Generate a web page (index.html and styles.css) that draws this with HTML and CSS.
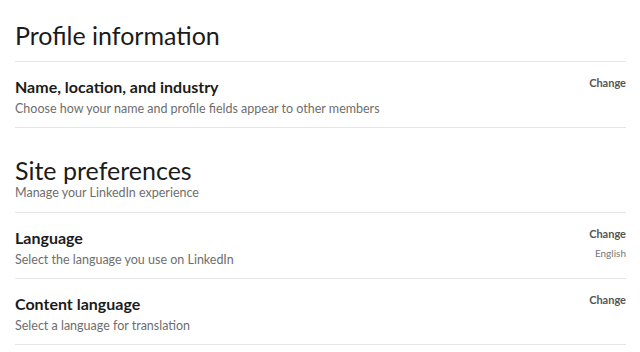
FILE: index.html
```html
<!DOCTYPE html>
<html lang="en">
<head>
  <meta charset="UTF-8" />
  <title>Settings</title>
  <link rel="stylesheet" href="styles.css">
</head>
<body>
  <div class="settings">
    <section class="group">
      <div class="group-head">
        <h2>Profile information</h2>
      </div>
      <div class="row">
        <div class="row-text">
          <h3>Name, location, and industry</h3>
          <p>Choose how your name and profile fields appear to other members</p>
        </div>
        <div class="row-action">
          <a href="#">Change</a>
        </div>
      </div>
    </section>

    <section class="group">
      <div class="group-head with-sub">
        <h2>Site preferences</h2>
        <p>Manage your LinkedIn experience</p>
      </div>
      <div class="row">
        <div class="row-text">
          <h3>Language</h3>
          <p>Select the language you use on LinkedIn</p>
        </div>
        <div class="row-action">
          <a href="#">Change</a>
          <span class="value">English</span>
        </div>
      </div>
      <div class="row">
        <div class="row-text">
          <h3>Content language</h3>
          <p>Select a language for translation</p>
        </div>
        <div class="row-action">
          <a href="#">Change</a>
        </div>
      </div>
    </section>
  </div>
</body>
</html>
```

FILE: styles.css
```css
* {
  box-sizing: border-box;
  margin: 0;
  padding: 0;
}

body {
  font-family: 'Lato', 'Open Sans', sans-serif;
  background: #fff;
  color: #1d1d1d;
}

.settings {
  padding: 0 14px 0 15px;
}

.group-head {
  height: 62px;
  padding-top: 20px;
  border-bottom: 1px solid #e6e6e6;
}

.group-head.with-sub {
  height: 85px;
  padding-top: 27px;
}

.group-head h2 {
  font-size: 25px;
  font-weight: 400;
  line-height: 30px;
  color: #1b1b1b;
}

.group-head p {
  font-size: 12.5px;
  line-height: 16px;
  color: #6e6e6e;
}

.row {
  display: flex;
  justify-content: space-between;
  height: 66px;
  padding-top: 14px;
  border-bottom: 1px solid #e6e6e6;
}

.row-text h3 {
  font-size: 16px;
  font-weight: 700;
  line-height: 21px;
  color: #1b1b1b;
}

.row-text p {
  font-size: 12.5px;
  line-height: 18px;
  color: #6e6e6e;
  margin-top: 3px;
}

.row-action {
  display: flex;
  flex-direction: column;
  align-items: flex-end;
}

.row-action a {
  font-size: 11px;
  font-weight: 700;
  line-height: 13px;
  color: #555;
  text-decoration: none;
}

.row-action .value {
  font-size: 10px;
  line-height: 14px;
  color: #777;
  margin-top: 6px;
}
```
